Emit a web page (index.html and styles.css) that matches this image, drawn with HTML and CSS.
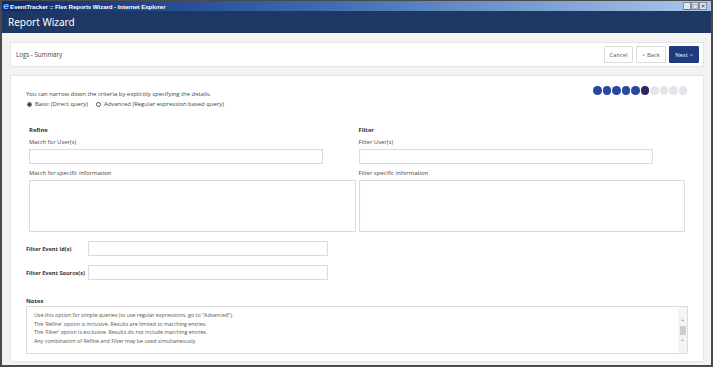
FILE: index.html
```html
<!DOCTYPE html>
<html lang="en">
<head>
  <meta charset="UTF-8" />
  <title>EventTracker :: Flex Reports Wizard</title>
  <link rel="stylesheet" href="styles.css">
</head>
<body>

<div class="window">

  <!-- IE title bar -->
  <div class="titlebar">
    <span class="ie-icon">e</span>
    <span class="titlebar-text">EventTracker :: Flex Reports Wizard - Internet Explorer</span>
    <div class="win-buttons">
      <span class="win-btn">_</span>
      <span class="win-btn">&#9633;</span>
      <span class="win-btn">&#215;</span>
    </div>
  </div>

  <div class="appbar">Report Wizard</div>

  <div class="main">

    <div class="panel toolbar">
      <div class="crumb">Logs - Summary</div>
      <div class="actions">
        <button class="btn">Cancel</button>
        <button class="btn">&lt; Back</button>
        <button class="btn btn-primary">Next &gt;</button>
      </div>
    </div>

    <div class="panel card">
      <div class="intro-row">
        <div class="intro">
          <div>You can narrow down the criteria by explicitly specifying the details.</div>
          <div class="radios">
            <label class="radio"><span class="dot-radio checked"></span>Basic (Direct query)</label>
            <label class="radio"><span class="dot-radio"></span>Advanced (Regular expression based query)</label>
          </div>
        </div>
        <div class="steps">
          <span class="step done"></span>
          <span class="step done"></span>
          <span class="step done"></span>
          <span class="step done"></span>
          <span class="step done"></span>
          <span class="step current"></span>
          <span class="step"></span>
          <span class="step"></span>
          <span class="step"></span>
          <span class="step"></span>
        </div>
      </div>

      <div class="columns">
        <div class="col">
          <div class="col-title">Refine</div>
          <div class="label">Match for User(s)</div>
          <div class="input"></div>
          <div class="label">Match for specific information</div>
          <div class="textarea"></div>
        </div>
        <div class="col">
          <div class="col-title">Filter</div>
          <div class="label">Filter User(s)</div>
          <div class="input"></div>
          <div class="label">Filter specific information</div>
          <div class="textarea"></div>
        </div>
      </div>

      <div class="field-row">
        <div class="field-label">Filter Event Id(s)</div>
        <div class="input wide"></div>
      </div>
      <div class="field-row">
        <div class="field-label">Filter Event Source(s)</div>
        <div class="input wide"></div>
      </div>

      <div class="notes-title">Notes</div>
      <div class="notes">
        <div class="notes-text">
          <div>Use this option for simple queries (to use regular expressions, go to "Advanced").</div>
          <div>The 'Refine' option is inclusive. Results are limited to matching entries.</div>
          <div>The 'Filter' option is exclusive. Results do not include matching entries.</div>
          <div>Any combination of Refine and Filter may be used simultaneously.</div>
        </div>
        <div class="scrollbar">
          <span class="arrow">&#8963;</span>
          <span class="thumb"></span>
          <span class="arrow">&#8964;</span>
        </div>
      </div>
    </div>

  </div>
</div>

</body>
</html>
```

FILE: styles.css
```css
body {
  margin: 0;
  padding: 0;
  font-family: "Open Sans", "Noto Sans", sans-serif;
  color: #333;
  overflow: hidden;
}

.window {
  width: 713px;
  height: 367px;
  box-sizing: border-box;
  border: 2px solid #4a4a4a;
  border-top-width: 1px;
  display: flex;
  flex-direction: column;
  background: #f3f3f3;
}

/* title bar */
.titlebar {
  height: 10px;
  display: flex;
  align-items: center;
  background: linear-gradient(to right, #0c2a6e 0%, #3d6bb0 45%, #a9c8ec 100%);
  padding: 0 4px 0 1px;
}

.ie-icon {
  font-family: "DejaVu Sans", sans-serif;
  font-weight: bold;
  font-style: italic;
  font-size: 9px;
  line-height: 9px;
  color: #6fb3ff;
  margin-right: 1px;
}

.titlebar-text {
  color: #fff;
  font-family: "Liberation Sans", sans-serif;
  font-weight: bold;
  font-size: 6.2px;
  letter-spacing: -0.1px;
}

.win-buttons {
  margin-left: auto;
  display: flex;
}

.win-btn {
  width: 6px;
  height: 6px;
  border: 1px solid #7a8ca8;
  background: #dfe6ef;
  color: #222;
  font-size: 6px;
  line-height: 5px;
  text-align: center;
  font-family: "DejaVu Sans", sans-serif;
}

.appbar {
  height: 22px;
  background: #1f3763;
  color: #fff;
  font-size: 10px;
  line-height: 22px;
  padding-left: 6px;
  font-family: "Noto Sans", sans-serif;
}

.main {
  flex: 1;
  display: flex;
  flex-direction: column;
  gap: 8px;
  padding: 9px 7px 3px 8px;
  min-height: 0;
}

.panel {
  background: #fff;
  border: 1px solid #e6e6e6;
  box-shadow: 0 0 1px rgba(0, 0, 0, 0.08);
}

.toolbar {
  height: 25px;
  box-sizing: border-box;
  display: flex;
  align-items: center;
  padding: 0 4px 0 5px;
}

.crumb {
  font-size: 6.2px;
  color: #444;
}

.actions {
  margin-left: auto;
  display: flex;
  gap: 3px;
}

.btn {
  height: 17px;
  width: 29px;
  padding: 0;
  white-space: nowrap;
  border: 1px solid #dcdcdc;
  background: #fff;
  font-family: "Open Sans", sans-serif;
  font-size: 5.8px;
  color: #555;
  border-radius: 1px;
}

.btn + .btn {
  width: 30px;
}

.btn-primary {
  background: #1e3c7d;
  border-color: #1e3c7d;
  color: #fff;
}

.card {
  flex: 1;
  padding: 14px 15px 0 15px;
  font-size: 5.9px;
  color: #444;
}

.intro-row {
  display: flex;
  align-items: flex-start;
}

.radios {
  display: flex;
  gap: 7px;
  margin-top: 2px;
}

.radio {
  display: flex;
  align-items: center;
  gap: 3px;
  padding-left: 1px;
}

.dot-radio {
  width: 5px;
  height: 5px;
  border: 1px solid #555;
  border-radius: 50%;
  display: inline-block;
  box-sizing: border-box;
  background: #fff;
}

.dot-radio.checked {
  background: radial-gradient(circle, #333 0 1.2px, #fff 1.5px);
}

.steps {
  margin-left: auto;
  margin-right: 1px;
  margin-top: -4px;
  display: flex;
  gap: 1px;
}

.step {
  width: 8.5px;
  height: 8.5px;
  border-radius: 50%;
  background: #e3e5ea;
}

.step.done {
  background: #27489b;
}

.step.current {
  background: #2b2a58;
}

.columns {
  display: flex;
  gap: 3px;
  margin-top: 18px;
  padding: 0 3px;
}

.col {
  flex: 1;
}

.col-title {
  font-weight: bold;
  color: #333;
  margin-bottom: 4px;
}

.label {
  margin-bottom: 3px;
}

.input {
  width: 294px;
  height: 15px;
  box-sizing: border-box;
  border: 1px solid #dcdcdc;
  box-shadow: inset 0 0 1px rgba(0, 0, 0, 0.08);
  margin-bottom: 5px;
}

.textarea {
  height: 52px;
  box-sizing: border-box;
  border: 1px solid #dcdcdc;
  box-shadow: inset 0 0 1px rgba(0, 0, 0, 0.08);
}

.field-row {
  display: flex;
  align-items: center;
  margin-top: 9px;
}

.field-row + .field-row {
  margin-top: 9px;
}

.field-label {
  width: 62px;
  font-weight: bold;
  font-size: 5.6px;
  color: #333;
}

.input.wide {
  width: 240px;
  margin-bottom: 0;
}

.notes-title {
  font-weight: bold;
  color: #333;
  margin-top: 17px;
  margin-bottom: 1px;
}

.notes {
  height: 48px;
  box-sizing: border-box;
  border: 1px solid #dcdcdc;
  display: flex;
}

.notes-text {
  flex: 1;
  padding: 4px 7px;
  font-size: 5.3px;
  line-height: 8.6px;
  color: #555;
}

.scrollbar {
  width: 9px;
  background: #f4f4f4;
  display: flex;
  flex-direction: column;
  align-items: center;
  justify-content: center;
  gap: 1px;
}

.arrow {
  font-family: "DejaVu Sans", sans-serif;
  font-size: 6px;
  line-height: 6px;
  color: #666;
}

.thumb {
  width: 6px;
  height: 9px;
  background: #cdcdcd;
}
```
